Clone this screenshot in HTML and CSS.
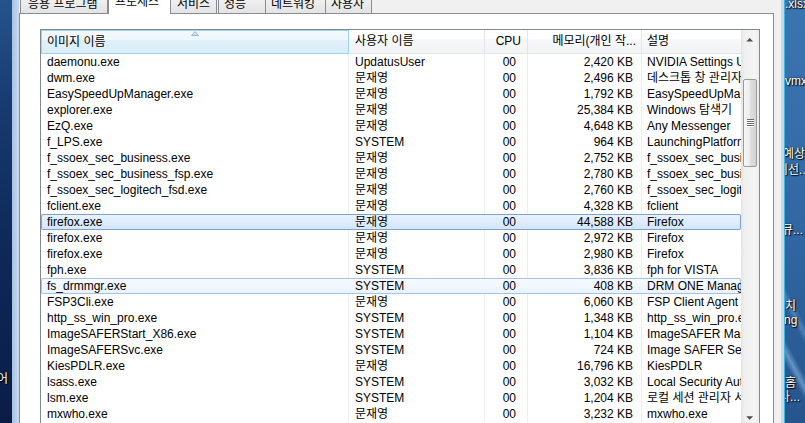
FILE: index.html
```html
<!DOCTYPE html>
<html lang="ko">
<head>
<meta charset="utf-8">
<title>Windows 작업 관리자</title>
<link rel="stylesheet" href="styles.css">
</head>
<body>
<div class="screen">
  <div class="desk desk-left">
    <span class="dlabel l-eo">어</span>
  </div>
  <div class="frame-left"></div>
  <div class="client">
    <div class="tabs">
      <div class="tab t1">응용 프로그램</div>
      <div class="tab t2 active">프로세스</div>
      <div class="tab t3">서비스</div>
      <div class="tab t4">성능</div>
      <div class="tab t5">네트워킹</div>
      <div class="tab t6">사용자</div>
    </div>
    <div class="page">
      <div class="listview">
        <div class="lv-main">
          <div class="lv-header">
            <div class="hcell c-name sorted">이미지 이름<svg class="sort-arrow" width="8" height="5" viewBox="0 0 8 5"><polygon points="4,0.5 0.5,4.5 7.5,4.5" fill="#cddff0" stroke="#8fa9c6" stroke-width="0.8"/></svg></div>
            <div class="hcell c-user">사용자 이름</div>
            <div class="hcell c-cpu">CPU</div>
            <div class="hcell c-mem">메모리(개인 작...</div>
            <div class="hcell c-desc">설명</div>
          </div>
          <div class="lv-body">
            <div class="row"><div class="cell c-name">daemonu.exe</div><div class="cell c-user">UpdatusUser</div><div class="cell c-cpu">00</div><div class="cell c-mem">2,420 KB</div><div class="cell c-desc">NVIDIA Settings Update Manager</div></div>
            <div class="row"><div class="cell c-name">dwm.exe</div><div class="cell c-user">문재영</div><div class="cell c-cpu">00</div><div class="cell c-mem">2,496 KB</div><div class="cell c-desc">데스크톱 창 관리자</div></div>
            <div class="row"><div class="cell c-name">EasySpeedUpManager.exe</div><div class="cell c-user">문재영</div><div class="cell c-cpu">00</div><div class="cell c-mem">1,792 KB</div><div class="cell c-desc">EasySpeedUpManager</div></div>
            <div class="row"><div class="cell c-name">explorer.exe</div><div class="cell c-user">문재영</div><div class="cell c-cpu">00</div><div class="cell c-mem">25,384 KB</div><div class="cell c-desc">Windows 탐색기</div></div>
            <div class="row"><div class="cell c-name">EzQ.exe</div><div class="cell c-user">문재영</div><div class="cell c-cpu">00</div><div class="cell c-mem">4,648 KB</div><div class="cell c-desc">Any Messenger</div></div>
            <div class="row"><div class="cell c-name">f_LPS.exe</div><div class="cell c-user">SYSTEM</div><div class="cell c-cpu">00</div><div class="cell c-mem">964 KB</div><div class="cell c-desc">LaunchingPlatform</div></div>
            <div class="row"><div class="cell c-name">f_ssoex_sec_business.exe</div><div class="cell c-user">문재영</div><div class="cell c-cpu">00</div><div class="cell c-mem">2,752 KB</div><div class="cell c-desc">f_ssoex_sec_business</div></div>
            <div class="row"><div class="cell c-name">f_ssoex_sec_business_fsp.exe</div><div class="cell c-user">문재영</div><div class="cell c-cpu">00</div><div class="cell c-mem">2,780 KB</div><div class="cell c-desc">f_ssoex_sec_business_fsp</div></div>
            <div class="row"><div class="cell c-name">f_ssoex_sec_logitech_fsd.exe</div><div class="cell c-user">문재영</div><div class="cell c-cpu">00</div><div class="cell c-mem">2,760 KB</div><div class="cell c-desc">f_ssoex_sec_logitech_fsd</div></div>
            <div class="row"><div class="cell c-name">fclient.exe</div><div class="cell c-user">문재영</div><div class="cell c-cpu">00</div><div class="cell c-mem">4,328 KB</div><div class="cell c-desc">fclient</div></div>
            <div class="row sel"><div class="cell c-name">firefox.exe</div><div class="cell c-user">문재영</div><div class="cell c-cpu">00</div><div class="cell c-mem">44,588 KB</div><div class="cell c-desc">Firefox</div></div>
            <div class="row"><div class="cell c-name">firefox.exe</div><div class="cell c-user">문재영</div><div class="cell c-cpu">00</div><div class="cell c-mem">2,972 KB</div><div class="cell c-desc">Firefox</div></div>
            <div class="row"><div class="cell c-name">firefox.exe</div><div class="cell c-user">문재영</div><div class="cell c-cpu">00</div><div class="cell c-mem">2,980 KB</div><div class="cell c-desc">Firefox</div></div>
            <div class="row"><div class="cell c-name">fph.exe</div><div class="cell c-user">SYSTEM</div><div class="cell c-cpu">00</div><div class="cell c-mem">3,836 KB</div><div class="cell c-desc">fph for VISTA</div></div>
            <div class="row hot"><div class="cell c-name">fs_drmmgr.exe</div><div class="cell c-user">SYSTEM</div><div class="cell c-cpu">00</div><div class="cell c-mem">408 KB</div><div class="cell c-desc">DRM ONE Manager</div></div>
            <div class="row"><div class="cell c-name">FSP3Cli.exe</div><div class="cell c-user">문재영</div><div class="cell c-cpu">00</div><div class="cell c-mem">6,060 KB</div><div class="cell c-desc">FSP Client Agent</div></div>
            <div class="row"><div class="cell c-name">http_ss_win_pro.exe</div><div class="cell c-user">SYSTEM</div><div class="cell c-cpu">00</div><div class="cell c-mem">1,348 KB</div><div class="cell c-desc">http_ss_win_pro.exe</div></div>
            <div class="row"><div class="cell c-name">ImageSAFERStart_X86.exe</div><div class="cell c-user">SYSTEM</div><div class="cell c-cpu">00</div><div class="cell c-mem">1,104 KB</div><div class="cell c-desc">ImageSAFER Manager</div></div>
            <div class="row"><div class="cell c-name">ImageSAFERSvc.exe</div><div class="cell c-user">SYSTEM</div><div class="cell c-cpu">00</div><div class="cell c-mem">724 KB</div><div class="cell c-desc">Image SAFER Service</div></div>
            <div class="row"><div class="cell c-name">KiesPDLR.exe</div><div class="cell c-user">문재영</div><div class="cell c-cpu">00</div><div class="cell c-mem">16,796 KB</div><div class="cell c-desc">KiesPDLR</div></div>
            <div class="row"><div class="cell c-name">lsass.exe</div><div class="cell c-user">SYSTEM</div><div class="cell c-cpu">00</div><div class="cell c-mem">3,032 KB</div><div class="cell c-desc">Local Security Authority Process</div></div>
            <div class="row"><div class="cell c-name">lsm.exe</div><div class="cell c-user">SYSTEM</div><div class="cell c-cpu">00</div><div class="cell c-mem">1,204 KB</div><div class="cell c-desc">로컬 세션 관리자 서비스</div></div>
            <div class="row"><div class="cell c-name">mxwho.exe</div><div class="cell c-user">문재영</div><div class="cell c-cpu">00</div><div class="cell c-mem">3,232 KB</div><div class="cell c-desc">mxwho.exe</div></div>
          </div>
        </div>
        <div class="vscroll">
          <div class="sb-btn"><svg width="18" height="17" viewBox="0 0 18 17"><polygon points="8.7,8 5.3,11.6 12.1,11.6" fill="#4d4d4d"/></svg></div>
          <div class="sb-track">
            <div class="sb-thumb"><svg width="7" height="8" viewBox="0 0 7 8"><rect x="0" y="0" width="7" height="1" fill="#6a6a6a"/><rect x="0" y="1" width="7" height="1" fill="#ffffff"/><rect x="0" y="2" width="7" height="1" fill="#6a6a6a"/><rect x="0" y="3" width="7" height="1" fill="#ffffff"/><rect x="0" y="4" width="7" height="1" fill="#6a6a6a"/><rect x="0" y="5" width="7" height="1" fill="#ffffff"/><rect x="0" y="6" width="7" height="1" fill="#6a6a6a"/><rect x="0" y="7" width="7" height="1" fill="#ffffff"/></svg></div>
          </div>
          <div class="sb-btn"><svg width="18" height="17" viewBox="0 0 18 17"><polygon points="5.3,7.2 12.1,7.2 8.7,10.7" fill="#4d4d4d"/></svg></div>
        </div>
      </div>
    </div>
  </div>
  <div class="frame-right"></div>
  <div class="desk desk-right">
    <span class="dlabel r-xlsx">.xlsx</span>
    <span class="dlabel r-vmx">vmx</span>
    <span class="dlabel r-yesang">예상</span>
    <span class="dlabel r-seon">이선...</span>
    <span class="dlabel r-kyu">큐...</span>
    <span class="dlabel r-chi">치</span>
    <span class="dlabel r-ng">ng</span>
    <span class="dlabel r-hom">홈</span>
    <span class="dlabel r-na">나...</span>
  </div>
</div>
</body>
</html>
```

FILE: styles.css
```css
html, body {
  margin: 0;
  padding: 0;
}

body {
  width: 805px;
  height: 423px;
  overflow: hidden;
  background: #0e2a5c;
  font-family: "Liberation Sans", "Noto Sans CJK KR", sans-serif;
  font-size: 12px;
  color: #000;
}

.screen {
  display: flex;
  width: 805px;
  height: 423px;
  overflow: hidden;
}

/* desktop strips */
.desk {
  position: relative;
  overflow: hidden;
  flex: none;
  height: 423px;
}

.desk-left {
  width: 12px;
  background: linear-gradient(#25548d 0%, #173a70 25%, #0e2857 60%, #0a1d47 100%);
}

.desk-right {
  width: 20px;
  background:
    linear-gradient(62deg, transparent 0 30%, rgba(150, 195, 235, 0.55) 36%, transparent 42%, transparent 58%, rgba(120, 170, 220, 0.45) 63%, transparent 68%) 0 260px / 20px 163px no-repeat,
    linear-gradient(#3b75b1 0%, #346ca8 40%, #2d619c 70%, #26558d 100%);
}

.dlabel {
  position: absolute;
  color: #fff;
  font-size: 12px;
  line-height: 12px;
  height: 13px;
  overflow: visible;
  white-space: nowrap;
  text-shadow: 0 0 2px #000, 1px 1px 1px #000;
}

.l-eo { left: -3px; top: 373px; }
.r-xlsx { left: 0; top: -2px; }
.r-vmx { left: 0; top: 75px; }
.r-yesang { left: -2px; top: 148px; }
.r-seon { left: -8px; top: 164px; }
.r-kyu { left: -3px; top: 224px; }
.r-chi { left: 0; top: 300px; }
.r-ng { left: -1px; top: 314px; }
.r-hom { left: 0; top: 377px; }
.r-na { left: -6px; top: 391px; }

/* window frame */
.frame-left {
  width: 7px;
  flex: none;
  background: linear-gradient(to right, #a7c3e1, #c6daef);
}

.frame-right {
  box-sizing: border-box;
  width: 4px;
  flex: none;
  background: #c4d9ee;
  border-right: 1px solid #3fb5e6;
}

.client {
  width: 762px;
  flex: none;
  background: #f0f0f0;
  display: flex;
  flex-direction: column;
}

/* tabs */
.tabs {
  display: flex;
  align-items: flex-end;
  height: 18px;
  margin-top: -5px;
  padding-left: 1px;
  flex: none;
}

.tab {
  box-sizing: border-box;
  height: 18px;
  border: 1px solid #898c95;
  border-bottom: none;
  background: linear-gradient(#f3f3f3, #e3e3e3);
  padding-top: 2px;
  line-height: 12px;
  white-space: nowrap;
  flex: none;
}

.tab.active {
  position: relative;
  z-index: 1;
  height: 19px;
  margin-bottom: -1px;
  padding-top: 0;
  background: #fff;
}

.t1 { width: 88px; padding-left: 7px; }
.t2 { width: 63px; padding-left: 6px; }
.t3 { width: 47px; margin-left: -1px; padding-left: 6px; }
.t4 { width: 48px; margin-left: 1px; padding-left: 5px; }
.t5 { width: 61px; margin-left: -1px; padding-left: 5px; }
.t6 { width: 47px; margin-left: -1px; padding-left: 5px; }

/* tab page */
.page {
  box-sizing: border-box;
  width: 755px;
  flex: 1;
  min-height: 0;
  background: #fff;
  border: 1px solid #898c95;
  border-bottom: none;
  padding: 15px 0 0 20px;
}

.listview {
  box-sizing: border-box;
  width: 720px;
  height: 398px;
  border: 1px solid #828790;
  background: #fff;
  display: flex;
}

.lv-main {
  width: 700px;
  flex: none;
  overflow: hidden;
}

.lv-header {
  display: flex;
  height: 24px;
}

.hcell {
  box-sizing: border-box;
  height: 24px;
  line-height: 23px;
  flex: none;
  white-space: nowrap;
  overflow: hidden;
  border-right: 1px solid #e1e4e8;
  border-bottom: 1px solid #e2e5e9;
  background: linear-gradient(#ffffff 0, #ffffff 40%, #f7f8f9 40%, #f2f3f5 100%);
}

.hcell.sorted {
  position: relative;
  border: 1px solid #9fd3ef;
  line-height: 22px;
  padding-left: 5px;
  background: linear-gradient(#f2f9fd 0, #eef7fc 40%, #e0f0f9 40%, #d9edf8 100%);
}

.sort-arrow {
  position: absolute;
  left: 149px;
  top: 0;
}

.lv-body {
  display: flex;
  flex-direction: column;
}

.row {
  display: flex;
  height: 16px;
  line-height: 16px;
}

.cell {
  box-sizing: border-box;
  height: 16px;
  flex: none;
  white-space: nowrap;
  overflow: hidden;
  border-right: 1px solid #ebeff5;
}

.c-name { width: 308px; padding-left: 6px; }
.c-user { width: 136px; padding-left: 6px; }
.c-cpu { width: 43px; text-align: right; padding-right: 11px; }
.c-mem { width: 114px; text-align: right; padding-right: 8px; }
.c-desc { width: 99px; padding-left: 5px; border-right: none; }

.hcell.c-user { padding-left: 6px; }
.hcell.c-cpu { padding-right: 6px; }
.hcell.c-mem { padding-right: 5px; }
.hcell.c-desc { border-right: none; }

.row.sel {
  border-radius: 2px;
  background: linear-gradient(#eaf3fe, #d2e5fb);
  box-shadow: inset 0 0 0 1px #7da2ce;
}

.row.hot {
  border-radius: 2px;
  background: linear-gradient(#f8fbff, #e9f2fd);
  box-shadow: inset 0 0 0 1px #a3c3ea;
}

.row.sel .cell,
.row.hot .cell {
  border-right-color: transparent;
}

/* scrollbar */
.vscroll {
  width: 18px;
  flex: none;
  display: flex;
  flex-direction: column;
  background: linear-gradient(to right, #e4e4e4, #f0f0f0 20%, #f4f4f4 80%, #ececec);
}

.sb-btn {
  height: 17px;
  flex: none;
}

.sb-btn svg {
  display: block;
}

.sb-track {
  flex: 1;
}

.sb-thumb {
  box-sizing: border-box;
  width: 14px;
  height: 88px;
  margin: 32px 0 0 2px;
  border: 1px solid #9a9a9a;
  border-radius: 2px;
  background: linear-gradient(to right, #f7f7f7, #ededed 45%, #dddddd 55%, #d3d3d3);
  display: flex;
  align-items: center;
  justify-content: center;
}

.sb-thumb svg {
  display: block;
}
```
